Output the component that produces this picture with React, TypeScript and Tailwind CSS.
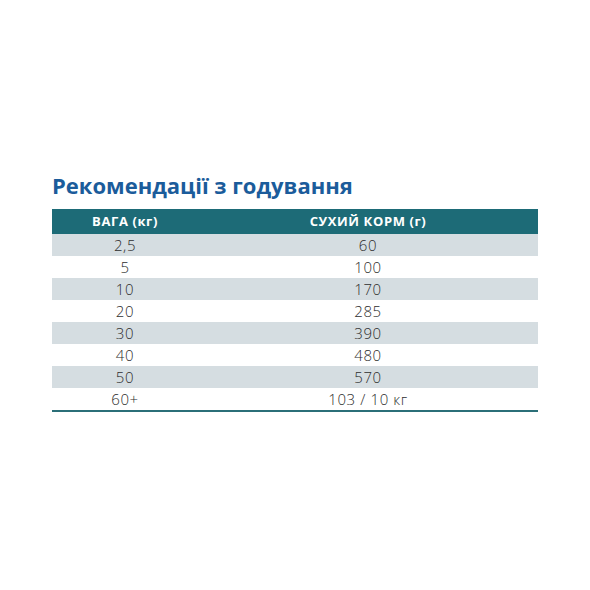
import React from "react";

const rows: [string, string][] = [
  ["2,5", "60"],
  ["5", "100"],
  ["10", "170"],
  ["20", "285"],
  ["30", "390"],
  ["40", "480"],
  ["50", "570"],
  ["60+", "103 / 10 кг"],
];

export default function App() {
  return (
    <div className="w-[590px] h-[590px] bg-white" style={{ fontFamily: '"Open Sans", "Noto Sans", sans-serif' }}>
      <div className="pl-[52px] pt-[169px] w-[538px]">
        <h1 className="text-[22px] leading-[32px] font-bold text-[#1b5c9b] tracking-[0px]">
          Рекомендації з годування
        </h1>
        <div className="mt-[8px] w-[486px] border-b-2 border-[#2b6f78]">
          <div className="flex h-[25px] bg-[#1d6b77] text-white text-[13px] font-bold items-center tracking-[0.6px]">
            <div className="w-[146px] text-center">ВАГА (кг)</div>
            <div className="flex-1 text-center">СУХИЙ КОРМ (г)</div>
          </div>
          {rows.map(([a, b], i) => (
            <div
              key={a}
              className={`flex h-[22px] items-center text-[15px] font-light tracking-[0.6px] text-[#2e2e2e] ${i % 2 === 0 ? "bg-[#d5dde1]" : "bg-white"}`}
            >
              <div className="w-[146px] text-center">{a}</div>
              <div className="flex-1 text-center">{b}</div>
            </div>
          ))}
        </div>
      </div>
    </div>
  );
}
